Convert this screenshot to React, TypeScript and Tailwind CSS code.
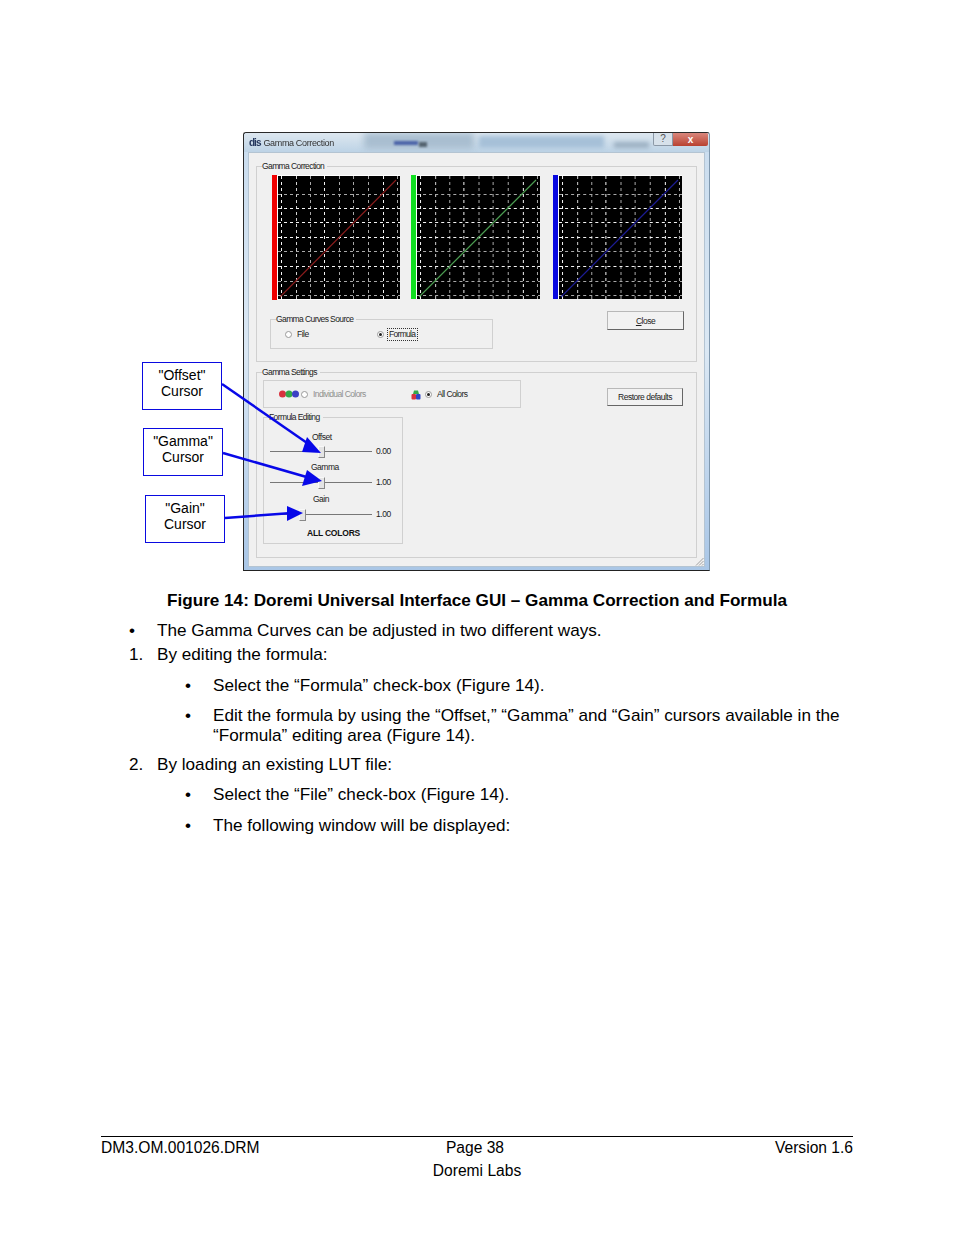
const plots = [
  { bar: "bg-[#f00000]", line: "#8a1c1c", box: "h-[125px] w-[128px]", margin: "" },
  { bar: "bg-[#10e020]", line: "#4c9e52", box: "h-[124px] w-[129px]", margin: "ml-[11px]" },
  { bar: "bg-[#0808e0]", line: "#1c1c96", box: "h-[124px] w-[129px]", margin: "ml-[13px]" },
];

// position and brightness of each grid line, read off the reference
const verticals = [
  [3, "#f4f4f4"], [18, "#d0d0d0"], [32, "#a8a8a8"], [46, "#f4f4f4"], [61, "#a8a8a8"],
  [75, "#a8a8a8"], [90, "#a8a8a8"], [105, "#f4f4f4"], [119, "#a8a8a8"],
] as const;
const horizontals = [
  [18, "#a8a8a8"], [32, "#f4f4f4"], [46, "#f4f4f4"], [61, "#f4f4f4"],
  [75, "#a8a8a8"], [90, "#f4f4f4"], [105, "#a8a8a8"], [119, "#a8a8a8"],
] as const;

function Plot({ bar, line, box, margin }: { bar: string; line: string; box: string; margin: string }) {
  return (
    <div className={`flex shrink-0 bg-white ${box} ${margin}`}>
      <div className={`h-full w-[5px] ${bar}`} />
      <svg viewBox="0 0 122 123" preserveAspectRatio="none" className="ml-px mt-px h-[123px] flex-1 bg-black">
        <g strokeDasharray="3 3" strokeWidth="1">
          {verticals.map(([p, c]) => (
            <line key={p} x1={p + 0.5} y1="0" x2={p + 0.5} y2="123" stroke={c} />
          ))}
          {horizontals.map(([p, c]) => (
            <line key={p} x1="0" y1={p + 0.5} x2="122" y2={p + 0.5} stroke={c} />
          ))}
        </g>
        <line x1="2" y1="121" x2="118" y2="4" stroke={line} strokeWidth="1.1" />
      </svg>
    </div>
  );
}

function GroupBox({ label, className, children }: { label: string; className: string; children?: React.ReactNode }) {
  return (
    <div className={`relative border border-[#d0d0d0] ${className}`}>
      <span className="absolute -top-[6px] left-[5px] bg-[#f0f0f0] pr-[3px] text-[8.5px] leading-[10px] tracking-[-0.6px] text-[#222]">
        {label}
      </span>
      {children}
    </div>
  );
}

function Radio({ checked }: { checked?: boolean }) {
  return (
    <span className="flex h-[7px] w-[7px] shrink-0 items-center justify-center rounded-full border border-[#9a9a9a] bg-white">
      {checked && <span className="h-[3px] w-[3px] rounded-full bg-[#222]" />}
    </span>
  );
}

function Button({ children, className }: { children: React.ReactNode; className: string }) {
  return (
    <div
      className={`flex items-center justify-center border border-[#b8b8b8] border-b-[#666] border-r-[#666] bg-[#f2f2f2] text-[8.5px] tracking-[-0.5px] text-[#222] ${className}`}
    >
      {children}
    </div>
  );
}

function Slider({ label, labelPad, value, thumb, top, rowTop }: { label: string; labelPad: string; value: string; thumb: string; top: string; rowTop: string }) {
  return (
    <div className={top}>
      <div className={`h-[10px] text-[8.5px] leading-[10px] tracking-[-0.5px] text-[#222] ${labelPad}`}>{label}</div>
      <div className={`flex h-[12px] items-center ${rowTop}`}>
        <div className="relative ml-[6px] h-px w-[102px] bg-[#777]">
          <span className={`absolute -top-[5px] h-[12px] w-[7px] border border-[#f8f8f8] border-b-[#888] border-r-[#888] bg-[#e4e4e4] ${thumb}`} />
        </div>
        <span className="ml-[4px] text-[8.5px] tracking-[-0.4px] text-[#222]">{value}</span>
      </div>
    </div>
  );
}

const callouts = [
  { name: '"Offset"', place: "left-[-101px] top-[230px]" },
  { name: '"Gamma"', place: "left-[-100px] top-[296px]" },
  { name: '"Gain"', place: "left-[-98px] top-[363px]" },
];

function GammaWindow() {
  return (
    <div className="flex h-[439px] w-[467px] flex-col rounded-t-[3px] border border-[#2a2a2a] border-r-[#7f97ad] border-b-[#222] bg-gradient-to-b from-[#c9dcee] via-[#dbe8f4] to-[#a9c6e6] text-[#222] blur-[0.3px]">
      <div className="relative flex h-[19px] shrink-0 items-center overflow-hidden rounded-t-[3px] bg-gradient-to-b from-[#dde7ef] to-[#bdd3e6] pl-[5px]">
        <span className="mr-[3px] text-[10px] font-bold leading-none tracking-[-1px] text-[#23365c]">dis</span>
        <span className="text-[9px] tracking-[-0.35px] text-[#333]">Gamma Correction</span>
        <span className="absolute left-[120px] top-0 h-[16px] w-[110px] bg-[#a9bed0] blur-[3px]" />
        <span className="absolute left-[150px] top-[8px] h-[4px] w-[24px] bg-[#4b63a8] blur-[1px]" />
        <span className="absolute left-[175px] top-[9px] h-[5px] w-[8px] bg-[#54636f] blur-[1px]" />
        <span className="absolute left-[235px] top-[3px] h-[12px] w-[125px] bg-[#a6c0d8] blur-[2px]" />
        <span className="absolute left-[370px] top-[9px] h-[6px] w-[35px] bg-[#9cb0c2] blur-[2px]" />
        <div className="absolute right-[1px] top-0 flex h-[13px]">
          <span className="flex w-[20px] items-center justify-center rounded-bl-[2px] border border-t-0 border-[#8b98a6] bg-[#d7e1ea] text-[10px] text-[#555]">?</span>
          <span className="flex w-[35px] items-center justify-center rounded-br-[2px] bg-gradient-to-b from-[#d9867c] to-[#b8402f] text-[10px] font-bold leading-none text-white">x</span>
        </div>
      </div>

      <div className="relative mx-[4px] flex h-[415px] flex-col border border-[#b4c4d2] bg-[#f0f0f0] px-[7px] pt-[13px]">
        <GroupBox label="Gamma Correction" className="h-[196px] w-[441px] shrink-0">
          <div className="flex pl-[15px] pt-[8px]">
            {plots.map((p) => (
              <Plot key={p.bar} {...p} />
            ))}
          </div>
          <div className="mt-[11px] flex items-start justify-between pl-[13px] pr-[12px]">
            <GroupBox label="Gamma Curves Source" className="mt-[8px] flex h-[30px] w-[223px] items-center pl-[14px]">
              <Radio />
              <span className="ml-[5px] text-[8.5px] tracking-[-0.5px]">File</span>
              <span className="ml-[68px]">
                <Radio checked />
              </span>
              <span className="ml-[3px] w-[31px] border border-dotted border-[#333] text-center text-[8.5px] leading-[11px] tracking-[-0.7px]">Formula</span>
            </GroupBox>
            <Button className="h-[19px] w-[77px]">
              <span className="underline">C</span>lose
            </Button>
          </div>
        </GroupBox>

        <GroupBox label="Gamma Settings" className="mt-[10px] h-[186px] w-[441px] shrink-0 pl-[6px] pr-[13px] pt-[7px]">
          <div className="flex items-start justify-between">
            <div className="flex h-[28px] w-[258px] items-center border border-[#d0d0d0] pl-[15px] text-[8.5px] tracking-[-0.6px]">
              <svg viewBox="0 0 20 8" className="h-[8px] w-[20px] shrink-0">
                <circle cx="3.5" cy="4" r="3.5" fill="#d8323e" />
                <circle cx="10" cy="4" r="3.5" fill="#35a84a" />
                <circle cx="16.5" cy="4" r="3.5" fill="#3b3fc4" />
              </svg>
              <span className="ml-[2px]">
                <Radio />
              </span>
              <span className="ml-[5px] w-[98px] text-[#8f8f8f]">Individual Colors</span>
              <svg viewBox="0 0 10 11" className="h-[11px] w-[10px] shrink-0">
                <path d="M2 5 L3 1.5 H7 L8 5 Z" fill="#35a84a" />
                <rect x="0.5" y="5" width="4.5" height="5.5" rx="1" fill="#d8323e" />
                <rect x="5" y="5" width="4.5" height="5.5" rx="1" fill="#2f45c8" />
              </svg>
              <span className="ml-[4px]">
                <Radio checked />
              </span>
              <span className="ml-[5px]">All Colors</span>
            </div>
            <Button className="mt-[8px] h-[18px] w-[76px]">Restore defaults</Button>
          </div>

          <GroupBox label="Formula Editing" className="mt-[9px] h-[127px] w-[140px] pt-[14px]">
            <Slider label="Offset" labelPad="pl-[48px]" value="0.00" thumb="left-[48px]" top="" rowTop="mt-[3px]" />
            <Slider label="Gamma" labelPad="pl-[47px]" value="1.00" thumb="left-[48px]" top="mt-[5px]" rowTop="mt-[4px]" />
            <Slider label="Gain" labelPad="pl-[49px]" value="1.00" thumb="left-[29px]" top="mt-[6px]" rowTop="mt-[4px]" />
            <div className="mt-[8px] pl-[43px] text-[8.5px] font-bold leading-[10px] tracking-[-0.2px] text-[#111]">ALL COLORS</div>
          </GroupBox>
        </GroupBox>

        <svg viewBox="0 0 9 9" className="absolute bottom-0 right-0 h-[9px] w-[9px]">
          <path d="M8.5 1 L1 8.5 M8.5 4 L4 8.5 M8.5 7 L7 8.5" stroke="#a0a0a0" strokeWidth="1" fill="none" />
        </svg>
      </div>
    </div>
  );
}

export default function App() {
  return (
    <div className="flex h-[1235px] flex-col bg-white font-['Liberation_Sans',Arial,sans-serif] text-[17.15px] leading-[20px] text-black">
      <div className="relative ml-[243px] mt-[132px] w-[467px]">
        <GammaWindow />
        {callouts.map((c) => (
          <div
            key={c.name}
            className={`absolute flex h-[48px] w-[80px] flex-col items-center border border-[#0a0ae0] bg-white pt-[4px] text-[14px] leading-[16px] ${c.place}`}
          >
            <span>{c.name}</span>
            <span>Cursor</span>
          </div>
        ))}
        <svg className="pointer-events-none absolute -left-[243px] -top-[132px] h-[1235px] w-[954px]" viewBox="0 0 954 1235">
          <g stroke="#0808e8" strokeWidth="2.5" fill="#0808e8">
            <line x1="222" y1="384" x2="310" y2="445" />
            <line x1="223" y1="453" x2="310" y2="478" />
            <line x1="225" y1="518" x2="292" y2="513" />
          </g>
          <g fill="#0808e8">
            <polygon points="321,453 307,437 302,452" />
            <polygon points="322,481 307,470 302,486" />
            <polygon points="303,513 287,506 287,521" />
          </g>
        </svg>
      </div>

      <p className="mt-[19px] text-center font-bold">Figure 14: Doremi Universal Interface GUI – Gamma Correction and Formula</p>

      <ul className="mt-[10px] pr-[100px]">
        <li className="flex">
          <span className="ml-[129px] w-[28px]">•</span>
          <span>The Gamma Curves can be adjusted in two different ways.</span>
        </li>
        <li className="mt-[4px] flex">
          <span className="ml-[129px] w-[28px]">1.</span>
          <span>By editing the formula:</span>
        </li>
        <li className="mt-[11px] flex">
          <span className="ml-[185px] w-[28px]">•</span>
          <span>Select the “Formula” check-box (Figure 14).</span>
        </li>
        <li className="mt-[10px] flex">
          <span className="ml-[185px] w-[28px] shrink-0">•</span>
          <span>Edit the formula by using the “Offset,” “Gamma” and “Gain” cursors available in the “Formula” editing area (Figure 14).</span>
        </li>
        <li className="mt-[9px] flex">
          <span className="ml-[129px] w-[28px]">2.</span>
          <span>By loading an existing LUT file:</span>
        </li>
        <li className="mt-[10px] flex">
          <span className="ml-[185px] w-[28px]">•</span>
          <span>Select the “File” check-box (Figure 14).</span>
        </li>
        <li className="mt-[11px] flex">
          <span className="ml-[185px] w-[28px]">•</span>
          <span>The following window will be displayed:</span>
        </li>
      </ul>

      <footer className="mx-[101px] mt-auto mb-[54px] border-t border-black pt-px text-[15.6px]">
        <div className="grid grid-cols-[1fr_auto_1fr]">
          <span>DM3.OM.001026.DRM</span>
          <span className="pr-[4px]">Page 38</span>
          <span className="text-right">Version 1.6</span>
        </div>
        <div className="mt-[3px] text-center">Doremi Labs</div>
      </footer>
    </div>
  );
}
